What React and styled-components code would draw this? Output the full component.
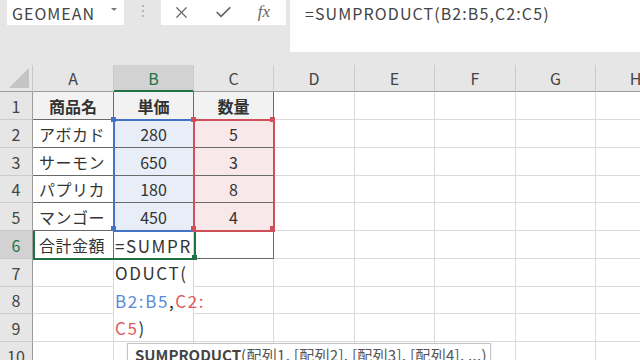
import React from "react";
import styled, { createGlobalStyle } from "styled-components";
import { X, Check } from "lucide-react";

const Global = createGlobalStyle`
  html, body { margin: 0; padding: 0; background: #e6e6e6; }
  * { box-sizing: border-box; }
`;

const FONT = `"Noto Sans CJK JP", "Noto Sans", sans-serif`;

const Screen = styled.div`
  width: 640px;
  height: 360px;
  overflow: hidden;
  background: #e6e6e6;
  font-family: ${FONT};
  color: #333;
  display: flex;
  flex-direction: column;
`;

const TopBar = styled.div`
  display: flex;
  align-items: flex-start;
  height: 52px;
  flex-shrink: 0;
`;

const NameBox = styled.div`
  margin-left: 7px;
  width: 117px;
  height: 25px;
  background: #fff;
  position: relative;
  display: flex;
  align-items: center;
  padding-left: 5px;
  font-size: 16px;
  color: #444;
  letter-spacing: 1px;
`;

const DropArrow = styled.span`
  position: absolute;
  right: 7px;
  top: 8px;
  width: 0;
  height: 0;
  border-left: 3px solid transparent;
  border-right: 3px solid transparent;
  border-top: 3px solid #777;
`;

const Grip = styled.div`
  width: 37px;
  height: 25px;
  display: flex;
  flex-direction: column;
  align-items: center;
  justify-content: center;
  gap: 3px;
  padding-bottom: 4px;
`;

const Dot = styled.span`
  width: 2px;
  height: 2px;
  background: #b5b5b5;
`;

const FxButtons = styled.div`
  width: 125px;
  height: 25px;
  background: #fff;
  display: flex;
  align-items: center;
  color: #666;
`;

const FxButton = styled.div`
  width: ${(p) => p.$w}px;
  display: flex;
  justify-content: center;
  align-items: center;
`;

const FxGlyph = styled.span`
  font-family: "Liberation Serif", serif;
  font-style: italic;
  font-size: 17px;
  color: #666;
  line-height: 1;
  padding-bottom: 3px;
`;

const FormulaBar = styled.div`
  margin-left: 4px;
  flex: 1;
  height: 52px;
  background: #fff;
  padding: 1px 0 0 15px;
  font-size: 16px;
  color: #444;
  letter-spacing: 1.1px;
`;

const Spacer = styled.div`
  height: 13px;
  flex-shrink: 0;
`;

const SheetWrap = styled.div`
  position: relative;
  flex: 1;
`;

const Grid = styled.div`
  display: grid;
  grid-template-columns: 33px 81px 80px 80px 81px 80px 81px 80px 80px;
  grid-template-rows: 27px 28px 28px 28px 27px 28px 28px 28px 27px 28px 28px;
  background: #fff;
`;

const Corner = styled.div`
  background: #e6e6e6;
  border-right: 1px solid #c8c8c8;
  border-bottom: 1px solid #9c9c9c;
  position: relative;
  &::after {
    content: "";
    position: absolute;
    right: 3px;
    bottom: 3px;
    width: 0;
    height: 0;
    border-left: 20px solid transparent;
    border-bottom: 20px solid #c4c4c4;
  }
`;

const ColHead = styled.div`
  background: ${(p) => (p.$active ? "#d2d2d2" : "#e6e6e6")};
  border-right: 1px solid #cbcbcb;
  border-bottom: ${(p) => (p.$active ? "2px solid #217346" : "1px solid #9c9c9c")};
  color: ${(p) => (p.$active ? "#217346" : "#444")};
  font-size: 16px;
  display: flex;
  align-items: center;
  justify-content: center;
  padding-top: ${(p) => (p.$active ? "1px" : "0")};
`;

const RowHead = styled.div`
  background: ${(p) => (p.$active ? "#d2d2d2" : "#e6e6e6")};
  border-right: 1px solid #9c9c9c;
  border-bottom: 1px solid #cbcbcb;
  color: ${(p) => (p.$active ? "#217346" : "#444")};
  font-size: 16px;
  display: flex;
  align-items: center;
  justify-content: center;
`;

const TINTS = { blue: "#e8eef8", red: "#f9e8e9", head: "#f2f2f2" };

const Cell = styled.div`
  background: ${(p) => (p.$tint ? TINTS[p.$tint] : "#fff")};
  border-right: 1px solid ${(p) => (p.$dark ? "#6a6a6a" : "#dadada")};
  border-bottom: 1px solid ${(p) => (p.$dark ? "#6a6a6a" : "#dadada")};
  font-size: 16px;
  font-weight: ${(p) => (p.$bold ? 700 : 400)};
  color: #333;
  display: flex;
  align-items: center;
  justify-content: ${(p) => (p.$align === "center" ? "center" : "flex-start")};
  padding-left: ${(p) => (p.$align === "center" ? "0" : "6px")};
  white-space: nowrap;
  overflow: hidden;
  letter-spacing: ${(p) => (p.$align === "center" ? "0" : "0.5px")};
`;

const RangeBox = styled.div`
  position: absolute;
  left: ${(p) => p.$x}px;
  top: ${(p) => p.$y}px;
  width: ${(p) => p.$w}px;
  height: ${(p) => p.$h}px;
  border: 2px solid ${(p) => p.$c};
  pointer-events: none;
`;

const Handle = styled.span`
  position: absolute;
  width: 5px;
  height: 5px;
  background: ${(p) => p.$c};
  left: ${(p) => p.$x}px;
  top: ${(p) => p.$y}px;
`;

const Selection = styled.div`
  position: absolute;
  left: 33px;
  top: 166px;
  width: 163px;
  height: 29px;
  border-left: 2px solid #217346;
  border-right: 2px solid #217346;
  border-bottom: 2px solid #217346;
`;

const EditBox = styled.div`
  position: absolute;
  left: 114px;
  top: 167px;
  width: 80px;
  height: 110px;
  background: #fff;
  border-right: 1px solid #d6d6d6;
  border-bottom: 1px solid #d6d6d6;
  display: flex;
  flex-direction: column;
  padding-left: 1px;
`;

const EditLine = styled.div`
  height: 27.7px;
  line-height: 27px;
  font-size: 17px;
  letter-spacing: 1.6px;
  color: #333;
  white-space: nowrap;
`;

const Ref = styled.span`
  color: ${(p) => p.$c};
`;

const Tooltip = styled.div`
  position: absolute;
  left: 127px;
  top: 278px;
  width: 364px;
  height: 26px;
  background: #fff;
  border: 1px solid #c4c4c4;
  box-shadow: 0 1px 2px rgba(0, 0, 0, 0.12);
  padding: 0 0 0 7px;
  font-size: 15px;
  line-height: 21px;
  color: #555;
  white-space: nowrap;
  letter-spacing: 0.3px;
`;

const FnName = styled.b`
  font-weight: 700;
  color: #444;
  letter-spacing: 0;
`;

const COLS = ["A", "B", "C", "D", "E", "F", "G", "H"];

const DATA = [
  [{ t: "商品名", bold: true, align: "center", tint: "head", dark: true }, { t: "単価", bold: true, align: "center", tint: "head", dark: true }, { t: "数量", bold: true, align: "center", tint: "head", dark: true }],
  [{ t: "アボカド", dark: true }, { t: "280", align: "center", tint: "blue", dark: true }, { t: "5", align: "center", tint: "red", dark: true }],
  [{ t: "サーモン", dark: true }, { t: "650", align: "center", tint: "blue", dark: true }, { t: "3", align: "center", tint: "red", dark: true }],
  [{ t: "パプリカ", dark: true }, { t: "180", align: "center", tint: "blue", dark: true }, { t: "8", align: "center", tint: "red", dark: true }],
  [{ t: "マンゴー", dark: true }, { t: "450", align: "center", tint: "blue", dark: true }, { t: "4", align: "center", tint: "red", dark: true }],
  [{ t: "合計金額", dark: true }, { t: "", dark: true }, { t: "", dark: true }],
];

const BLUE = "#4472c4";
const RED = "#d0505a";

export default function App() {
  const rows = [];
  for (let r = 1; r <= 10; r++) {
    rows.push(
      <RowHead key={`rh${r}`} $active={r === 6}>
        {r}
      </RowHead>
    );
    for (let c = 0; c < 8; c++) {
      const d = (DATA[r - 1] && DATA[r - 1][c]) || { t: "" };
      rows.push(
        <Cell key={`c${r}-${c}`} $bold={d.bold} $align={d.align} $tint={d.tint} $dark={d.dark}>
          {d.t}
        </Cell>
      );
    }
  }

  return (
    <Screen>
      <Global />
      <TopBar>
        <NameBox>
          GEOMEAN
          <DropArrow />
        </NameBox>
        <Grip>
          <Dot />
          <Dot />
          <Dot />
        </Grip>
        <FxButtons>
          <FxButton $w={40}>
            <X size={19} strokeWidth={1.5} />
          </FxButton>
          <FxButton $w={44}>
            <Check size={19} strokeWidth={2.2} />
          </FxButton>
          <FxButton $w={38}>
            <FxGlyph>fx</FxGlyph>
          </FxButton>
        </FxButtons>
        <FormulaBar>=SUMPRODUCT(B2:B5,C2:C5)</FormulaBar>
      </TopBar>
      <Spacer />
      <SheetWrap>
        <Grid>
          <Corner />
          {COLS.map((c) => (
            <ColHead key={c} $active={c === "B"}>
              {c}
            </ColHead>
          ))}
          {rows}
        </Grid>
        <EditBox>
          <EditLine>=SUMPR</EditLine>
          <EditLine>ODUCT(</EditLine>
          <EditLine>
            <Ref $c="#5b8ad8">B2:B5</Ref>,<Ref $c="#e05a5a">C2:</Ref>
          </EditLine>
          <EditLine>
            <Ref $c="#e05a5a">C5</Ref>)
          </EditLine>
        </EditBox>
        <Selection>
          <Handle $c="#217346" $x={157} $y={24} />
        </Selection>
        <RangeBox $x={113} $y={54} $w={82} $h={113} $c={BLUE}>
          <Handle $c={BLUE} $x={-4} $y={-4} />
          <Handle $c={BLUE} $x={-4} $y={105} />
        </RangeBox>
        <RangeBox $x={193} $y={54} $w={82} $h={113} $c={RED}>
          <Handle $c={RED} $x={-4} $y={-4} />
          <Handle $c={RED} $x={75} $y={-4} />
          <Handle $c={RED} $x={75} $y={105} />
          <Handle $c={RED} $x={-4} $y={105} />
        </RangeBox>
        <Tooltip>
          <FnName>SUMPRODUCT</FnName>(配列1, [配列2], [配列3], [配列4], ...)
        </Tooltip>
      </SheetWrap>
    </Screen>
  );
}
